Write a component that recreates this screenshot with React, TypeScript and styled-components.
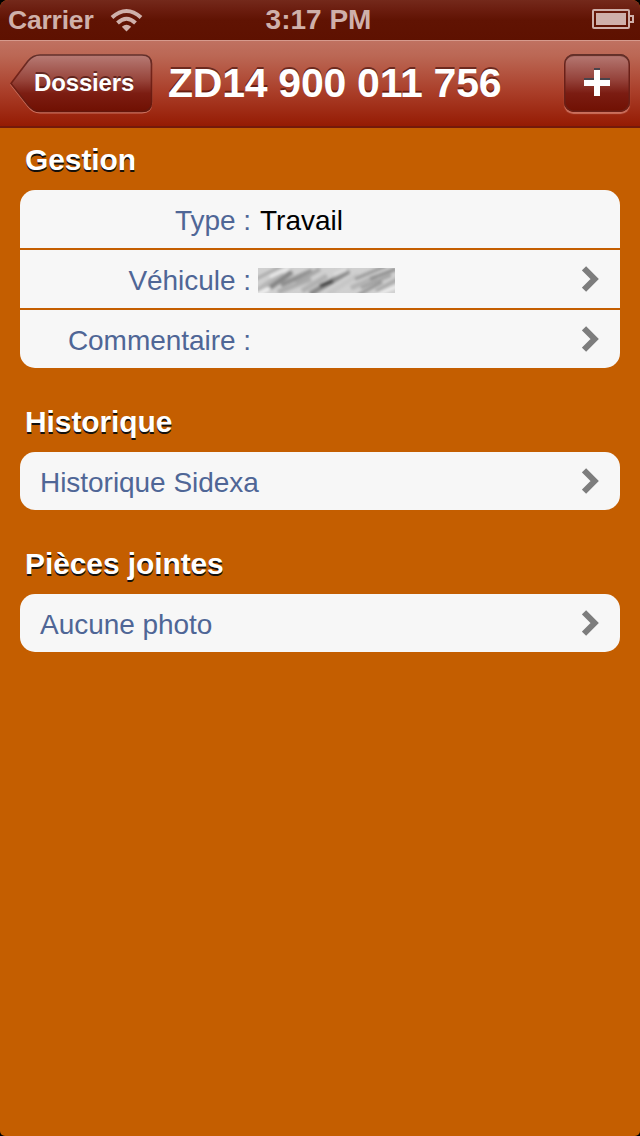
import React from "react";
import styled, { createGlobalStyle } from "styled-components";

const GlobalStyle = createGlobalStyle`
  * { box-sizing: border-box; }
  html, body { margin: 0; padding: 0; background: #000; }
  body { font-family: "Liberation Sans", Arial, sans-serif; }
`;

const Screen = styled.div`
  width: 640px;
  height: 1136px;
  overflow: hidden;
  border-radius: 8px 8px 5px 5px;
  background: #c45e00;
`;

const StatusBar = styled.div`
  display: grid;
  grid-template-columns: 1fr auto 1fr;
  align-items: center;
  height: 40px;
  padding: 0 6px 0 8px;
  background: linear-gradient(#74291b 0, #6b1d0f 10px, #601303 20px, #5e1100 40px);
  color: #cfb0aa;
  font-weight: bold;
`;

const StatusLeft = styled.div`
  display: flex;
  align-items: center;
  gap: 16px;
  font-size: 26.5px;
  line-height: 40px;
  letter-spacing: -0.2px;
`;

const Clock = styled.div`
  padding-right: 5px;
  font-size: 28px;
  line-height: 40px;
`;

const StatusRight = styled.div`
  display: flex;
  justify-content: flex-end;
  padding-bottom: 2px;
`;

const NavBar = styled.div`
  display: flex;
  align-items: flex-start;
  height: 88px;
  padding: 14px 10px 0 10px;
  background: linear-gradient(#c07262 0, #bb6754 16px, #ab402b 50px, #951b03 86px);
  box-shadow: inset 0 1px #d69a8d, inset 0 -2px #74190a;
`;

const BackButton = styled.div`
  display: grid;
  width: 143px;
  height: 60px;
  > * { grid-area: 1 / 1; }
`;

const BackLabel = styled.span`
  z-index: 1;
  padding-left: 24px;
  color: #fff;
  font-size: 24px;
  font-weight: bold;
  line-height: 57px;
  letter-spacing: -0.15px;
  text-shadow: 0 -2px rgba(50, 5, 0, 0.55);
`;

const Title = styled.h1`
  flex: 1;
  margin: 0;
  padding-left: 15px;
  color: #fff;
  font-size: 41px;
  line-height: 59px;
  letter-spacing: -0.26px;
  white-space: nowrap;
  text-shadow: 0 -2px rgba(60, 10, 5, 0.6);
`;

const AddButton = styled.div`
  display: flex;
  align-items: center;
  justify-content: center;
  width: 66px;
  height: 58px;
  padding-bottom: 2px;
  border-radius: 10px;
  background: linear-gradient(#b77b75, #944139 45%, #7b1c12 68%, #701002);
  box-shadow: inset 0 2px 1px #633029, inset 0 0 0 1.5px #6b2017, 0 2px 1px -0.5px #cb705e;
`;

const Content = styled.main`
  padding: 12px 20px;
`;

const Section = styled.section`
  margin-bottom: 34px;
`;

const SectionTitle = styled.h2`
  height: 50px;
  margin: 0;
  padding-left: 5px;
  color: #fff;
  font-size: 30px;
  line-height: 40px;
  letter-spacing: -0.1px;
  text-shadow: 0 2px #14100c;
`;

const Group = styled.div`
  display: flex;
  flex-direction: column;
  gap: 2px;
  overflow: hidden;
  border-radius: 15px;
`;

const Row = styled.div`
  display: flex;
  align-items: center;
  height: 58px;
  padding: 0 20px;
  background: #f7f7f7;
  font-size: 28px;
  line-height: 58px;
`;

const Label = styled.span<{ $column?: boolean }>`
  width: ${(p) => (p.$column ? "211px" : "auto")};
  padding-top: 3px;
  color: #4f6696;
  letter-spacing: -0.04px;
  text-align: ${(p) => (p.$column ? "right" : "left")};
`;

const Value = styled.span`
  padding: 3px 0 0 9px;
  color: #000;
`;

const HiddenValue = styled.svg`
  margin: 2px 0 0 7px;
`;

const Chevron = styled.svg`
  margin-left: auto;
`;

const WifiIcon = () => (
  <svg width="33" height="25" viewBox="0 0 33 25" fill="none" stroke="#cfb0aa" strokeWidth="4">
    <path d="M2 9.5Q16.500 -3.500 31 9.500" />
    <path d="M7.500 15Q16.500 6.500 25.500 15" />
    <path d="M16.500 23.500L11.800 18.800Q16.500 14.800 21.200 18.800Z" fill="#cfb0aa" stroke="none" />
  </svg>
);

const BatteryIcon = () => (
  <svg width="42" height="20" viewBox="0 0 42 20" fill="none" stroke="#cfb0aa" strokeWidth="2">
    <rect x="1" y="1" width="36" height="18" rx="1" />
    <rect x="4" y="4" width="30" height="12" fill="#cfb0aa" stroke="none" />
    <path d="M38 7H41V13H38" />
  </svg>
);

const BackShape = () => (
  <svg width="143" height="60" viewBox="0 0 143 60">
    <defs>
      <linearGradient id="back" x1="0" y1="0" x2="0" y2="1">
        <stop offset="0" stopColor="#b77b75" />
        <stop offset="0.45" stopColor="#97443a" />
        <stop offset="0.68" stopColor="#7c1d12" />
        <stop offset="1" stopColor="#701002" />
      </linearGradient>
      <linearGradient id="backEdge" x1="0" y1="0" x2="0" y2="1">
        <stop offset="0" stopColor="#62302b" />
        <stop offset="0.3" stopColor="#74241a" />
        <stop offset="1" stopColor="#64160b" />
      </linearGradient>
    </defs>
    <path transform="translate(0 1.300)" d="M1 29.500L18 7Q23 1 30 1H132Q141.500 1 141.500 10V48Q141.500 57.500 132 57.500H30Q23 57.500 18 51Z" fill="none" stroke="#cb705e" strokeWidth="1.500" />
    <path d="M1 29.500L18 7Q23 1 30 1H132Q141.500 1 141.500 10V48Q141.500 57.500 132 57.500H30Q23 57.500 18 51Z" fill="url(#back)" stroke="url(#backEdge)" strokeWidth="1.700" />
  </svg>
);

const PlusIcon = () => (
  <svg width="26" height="28" viewBox="0 0 26 28">
    <path d="M10 0H16V10H26V16H16V26H10V16H0V10H10Z" fill="#49434b" />
    <path d="M10 2H16V12H26V18H16V28H10V18H0V12H10Z" fill="#fff" />
  </svg>
);

const Disclosure = () => (
  <Chevron width="18" height="26" viewBox="0 0 18 26">
    <path d="M2 2.300L12.600 13L2 23.700" fill="none" stroke="#7d7d7d" strokeWidth="6" />
  </Chevron>
);

const strokes: [string, string, number][] = [
  ["M-4 12L24 -2", "#a9a9a9", 3],
  ["M-3 24L25 5", "#b5b5b5", 5],
  ["M10 21L34 4", "#858585", 5],
  ["M23 17L54 3", "#8f8f8f", 5],
  ["M20 24L53 11", "#acacac", 5],
  ["M38 15L62 1", "#a6a6a6", 4],
  ["M44 23L69 8", "#b0b0b0", 5],
  ["M52 26L91 3", "#878787", 5],
  ["M62 18L75 13", "#454545", 4],
  ["M70 26L100 7", "#c6c6c6", 5],
  ["M76 7L89 1", "#ddd", 4],
  ["M97 11L128 -2", "#999", 3],
  ["M93 20L118 9", "#b3b3b3", 5],
  ["M112 11L138 1", "#8c8c8c", 3],
  ["M103 20L133 7", "#a0a0a0", 3],
  ["M100 27L124 14", "#919191", 3],
  ["M118 23L142 10", "#aaa", 4],
  ["M12 9L31 0", "#eee", 3],
  ["M-2 27L12 20", "#f0f0f0", 4],
  ["M118 27L140 18", "#efefef", 3],
];

const Scribble = () => (
  <HiddenValue width="137" height="25" viewBox="0 0 137 25">
    <defs>
      <filter id="smear"><feGaussianBlur stdDeviation="1.7" /></filter>
    </defs>
    <rect width="137" height="25" fill="#d0d0d0" />
    <g filter="url(#smear)" fill="none">
      {strokes.map(([d, color, width]) => (
        <path key={d} d={d} stroke={color} strokeWidth={width} />
      ))}
    </g>
  </HiddenValue>
);

export default function App() {
  return (
    <>
      <GlobalStyle />
      <Screen>
        <StatusBar>
          <StatusLeft>Carrier<WifiIcon /></StatusLeft>
          <Clock>3:17 PM</Clock>
          <StatusRight><BatteryIcon /></StatusRight>
        </StatusBar>
        <NavBar>
          <BackButton>
            <BackShape />
            <BackLabel>Dossiers</BackLabel>
          </BackButton>
          <Title>ZD14 900 011 756</Title>
          <AddButton><PlusIcon /></AddButton>
        </NavBar>
        <Content>
          <Section>
            <SectionTitle>Gestion</SectionTitle>
            <Group>
              <Row><Label $column>Type :</Label><Value>Travail</Value></Row>
              <Row><Label $column>Véhicule :</Label><Scribble /><Disclosure /></Row>
              <Row><Label $column>Commentaire :</Label><Disclosure /></Row>
            </Group>
          </Section>
          <Section>
            <SectionTitle>Historique</SectionTitle>
            <Group>
              <Row><Label>Historique Sidexa</Label><Disclosure /></Row>
            </Group>
          </Section>
          <Section>
            <SectionTitle>Pièces jointes</SectionTitle>
            <Group>
              <Row><Label>Aucune photo</Label><Disclosure /></Row>
            </Group>
          </Section>
        </Content>
      </Screen>
    </>
  );
}
